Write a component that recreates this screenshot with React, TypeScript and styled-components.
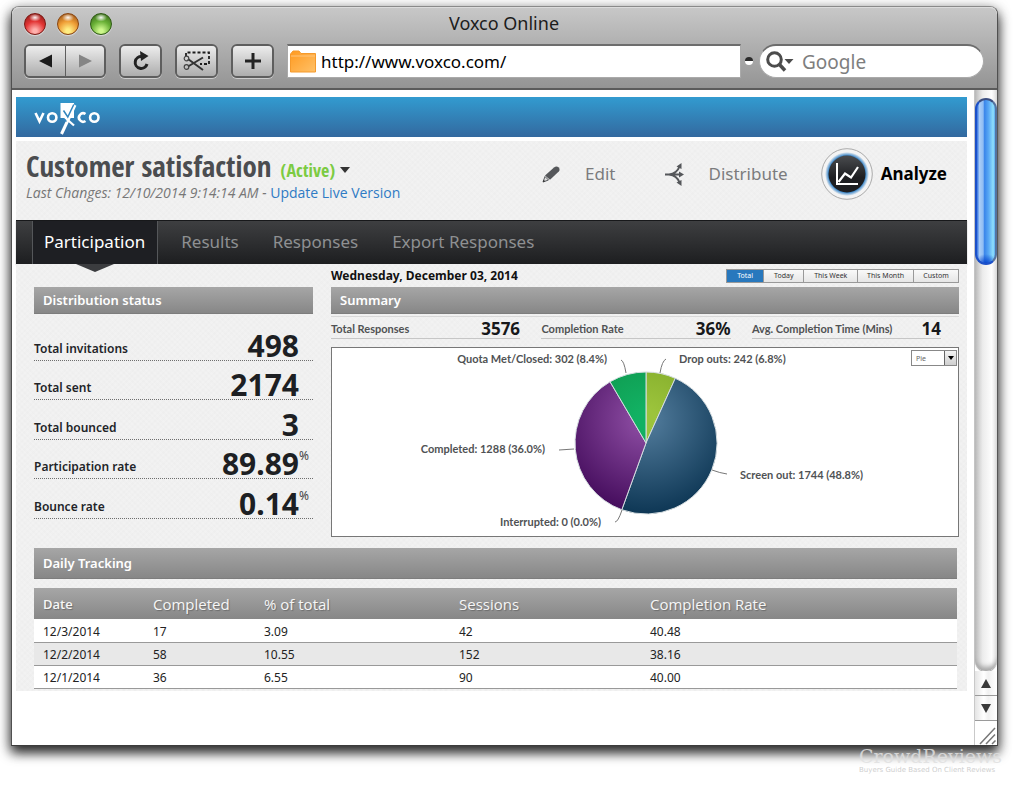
import React from "react";
import styled, { createGlobalStyle } from "styled-components";

const sans = `"Noto Sans", "Open Sans", sans-serif`;
const narrow = `"Open Sans Condensed", "Roboto Condensed", Lato, sans-serif`;
const humanist = `Lato, "Open Sans", sans-serif`;

const GlobalStyle = createGlobalStyle`
  *, *::before, *::after { box-sizing: border-box; }
  body { margin: 0; background: #fff; font-family: ${sans}; color: #222; }
  button, input, select { font: inherit; margin: 0; }
  a { text-decoration: none; color: inherit; }
  h1, h2, p, dl, dd { margin: 0; }
`;

/* ---------- Browser window ---------- */

const Stage = styled.div`
  display: flex;
  flex-direction: column;
  min-height: 100vh;
  padding: 6px 13px 0 11px;
  overflow: hidden;
`;

const Window = styled.div`
  display: flex;
  flex-direction: column;
  margin-right: 7px;
  border: 1px solid #555;
  border-color: #8a8a8a #505050 #3c3c3c #505050;
  border-radius: 8px 8px 0 0;
  background: #fff;
  box-shadow: 0 7px 12px rgba(0, 0, 0, 0.75), 0 3px 14px rgba(0, 0, 0, 0.4);
`;

const Chrome = styled.header`
  display: flex;
  flex-direction: column;
  gap: 7px;
  height: 83px;
  padding: 4px 13px 0 12px;
  border-bottom: 2px solid #5b5b5b;
  border-radius: 7px 7px 0 0;
  background: linear-gradient(#c8c8c8, #949494);
  box-shadow: inset 0 1px 0 #dcdcdc;
`;

const TitleRow = styled.div`
  display: grid;
  grid-template-columns: 1fr auto 1fr;
  align-items: center;
  height: 26px;
`;

const Lights = styled.div`
  display: flex;
  gap: 11px;
`;

const Light = styled.button<{ $dark: string; $base: string; $glow: string }>`
  width: 22px;
  height: 22px;
  padding: 0;
  border: 1px solid ${(p) => p.$dark};
  border-radius: 50%;
  background:
    radial-gradient(ellipse 6px 4px at 50% 18%, rgba(255, 255, 255, 0.95), rgba(255, 255, 255, 0) 100%),
    radial-gradient(circle at 50% 85%, ${(p) => p.$glow} 10%, ${(p) => p.$base} 50%, ${(p) => p.$dark} 100%);
  box-shadow: 0 1px 1px rgba(255, 255, 255, 0.5);
`;

const WindowTitle = styled.p`
  padding-bottom: 2px;
  font-size: 18px;
  line-height: 22px;
  color: #1c1c1c;
`;

const Toolbar = styled.div`
  display: flex;
  align-items: center;
`;

const ToolGroup = styled.div`
  display: flex;
  margin-right: 13px;
  border: 2px solid #5e5e5e;
  border-radius: 6px;
  overflow: hidden;
  box-shadow: 0 1px 0 rgba(255, 255, 255, 0.5);
`;

const ToolButton = styled.button`
  display: flex;
  align-items: center;
  justify-content: center;
  width: 39px;
  height: 30px;
  padding: 0;
  border: 0;
  background: linear-gradient(#ededed, #adadad);

  & + & {
    border-left: 1px solid #5e5e5e;
  }
`;

const AddressBar = styled.label`
  display: flex;
  flex: 1;
  align-items: center;
  gap: 5px;
  min-width: 0;
  height: 34px;
  padding: 0 2px;
  border: 1px solid #aaa;
  border-top: 2px solid #6d6d6d;
  background: #fff;
`;

const AddressInput = styled.input`
  flex: 1;
  width: 0;
  min-width: 0;
  padding: 0;
  border: 0;
  outline: 0;
  background: transparent;
  font-size: 17px;
  color: #000;
`;

const Knob = styled.span`
  width: 8px;
  height: 8px;
  margin: 0 6px 0 4px;
  border-radius: 50%;
  background: linear-gradient(#2b2b2b 45%, #fff 55%);
`;

const SearchBar = styled(AddressBar)`
  flex: 0 0 225px;
  gap: 8px;
  padding: 0 12px 0 6px;
  border-radius: 17px;
`;

const SearchInput = styled(AddressInput)`
  font-size: 19px;

  &::placeholder {
    color: #7e7e7e;
    opacity: 1;
  }
`;

const Viewport = styled.div`
  display: flex;
  min-height: 655px;
`;

/* ---------- Scroll bar ---------- */

const ScrollBar = styled.div`
  display: flex;
  flex-direction: column;
  width: 23px;
  border-left: 1px solid #c9c9c9;
  background: #fff;
`;

const ScrollTrack = styled.div`
  flex: 1;
  padding-top: 8px;
  border-radius: 0 0 11px 11px;
  background: linear-gradient(90deg, #bcbcbc, #ececec 35%, #fdfdfd 75%, #e2e2e2);
  box-shadow: inset 0 -6px 5px -2px #a5a5a5, 0 1px 1px #999;
`;

const ScrollThumb = styled.div`
  height: 167px;
  border: 2px solid #1c50c8;
  border-top-color: #3a4d80;
  border-right-color: #55739f;
  border-radius: 11px;
  background:
    radial-gradient(ellipse 12px 9px at 50% 100%, #0a49cf, rgba(20, 90, 220, 0)),
    linear-gradient(90deg, #2f6fe0, #a9cdf7 14%, #8fbcf3 34%, #3a86ea 42%, #5aaaf5 65%, #90e0fb 90%, #58a9f0);
`;

const ScrollButton = styled.button`
  display: flex;
  align-items: center;
  justify-content: center;
  height: 25px;
  padding: 0;
  border: 0;
  border-bottom: 1px solid #9a9a9a;
  background: linear-gradient(90deg, #e4e4e4, #fff 40%, #f1f1f1 60%, #fff);
`;

const Grip = styled.div`
  display: flex;
  align-items: flex-end;
  justify-content: flex-end;
  height: 24px;
`;

/* ---------- Page ---------- */

const Page = styled.main`
  display: flex;
  flex: 1;
  flex-direction: column;
  min-width: 0;
  padding: 7px 7px 0 4px;
`;

const texture = `
  repeating-linear-gradient(45deg, rgba(0, 0, 0, 0.008) 0 2px, transparent 2px 4px),
  repeating-linear-gradient(-45deg, rgba(0, 0, 0, 0.008) 0 2px, transparent 2px 4px),
  #f2f2f2`;

const Brand = styled.div`
  height: 40px;
  padding: 6px 18px 0;
  background: linear-gradient(#329bd0, #33699f);
`;

const PageHeader = styled.div`
  display: flex;
  justify-content: space-between;
  height: 79px;
  margin-top: 4px;
  padding: 7px 20px 0 10px;
  background: ${texture};
`;

const TitleLine = styled.div`
  display: flex;
  align-items: baseline;
  gap: 9px;
  height: 36px;
`;

const SurveyTitle = styled.h1`
  font-family: ${narrow};
  font-size: 29px;
  line-height: 36px;
  font-weight: 700;
  color: #4b4d50;
  white-space: nowrap;
`;

const StatusButton = styled.button`
  display: flex;
  align-items: center;
  gap: 5px;
  padding: 0;
  border: 0;
  background: none;
  font-family: ${narrow};
  font-size: 18px;
  line-height: 24px;
  font-weight: 700;
  color: #7ccb42;
`;

const Changes = styled.p`
  font-family: "Open Sans", sans-serif;
  font-size: 14px;
  line-height: 18px;
  font-style: italic;
  color: #777;
  white-space: nowrap;

  a {
    font-style: normal;
    color: #2f7bc4;
  }
`;

const Steps = styled.nav`
  display: flex;
  align-items: center;
  height: 52px;
`;

const Step = styled.a<{ $active?: boolean }>`
  display: flex;
  align-items: center;
  gap: ${(p) => (p.$active ? 8 : 25)}px;
  margin-left: ${(p) => (p.$active ? 33 : 49)}px;
  font-size: 17px;
  line-height: 24px;
  font-weight: ${(p) => (p.$active ? 700 : 400)};
  color: ${(p) => (p.$active ? "#000" : "#7b7b7d")};
`;

const Tabs = styled.nav`
  display: flex;
  height: 44px;
  padding-left: 16px;
  border-top: 1px solid #17181a;
  background: linear-gradient(#3e3f41, #1d1e20);
  box-shadow: 0 1px 1px #999;
`;

const Tab = styled.a<{ $active?: boolean }>`
  position: relative;
  display: flex;
  align-items: center;
  padding: ${(p) => (p.$active ? "0 12px 2px 11px" : "0 34px 2px 0")};
  margin-right: ${(p) => (p.$active ? 23 : 0)}px;
  border: solid #55575a;
  border-width: ${(p) => (p.$active ? "0 1px" : "0")};
  background: ${(p) => (p.$active ? "#1e1f23" : "none")};
  font-size: 17px;
  line-height: 24px;
  color: ${(p) => (p.$active ? "#fff" : "#8e9092")};
  white-space: nowrap;
`;

const TabPointer = styled.svg`
  position: absolute;
  top: 100%;
  left: 50%;
  margin-left: -19px;
  z-index: 1;
`;

const Body = styled.div`
  display: flex;
  flex-direction: column;
  padding: 0 8px 2px 18px;
  background: ${texture};
`;

const Columns = styled.div`
  display: flex;
  gap: 18px;
`;

const StatusColumn = styled.section`
  flex: 0 0 279px;
  padding-top: 23px;
`;

const SummaryColumn = styled.section`
  flex: 1;
  min-width: 0;
`;

const SectionBar = styled.h2<{ $tall?: boolean }>`
  display: flex;
  align-items: center;
  height: ${(p) => (p.$tall ? 31 : 27)}px;
  padding: 0 9px;
  border-bottom: 1px solid #7d7d7d;
  background: linear-gradient(#a6a6a6, #878787);
  font-size: 13px;
  line-height: 18px;
  font-weight: 600;
  color: #fff;
`;

const Metrics = styled.dl`
  display: grid;
  grid-auto-rows: 1fr;
  height: 198px;
  margin-top: 7px;
`;

const Metric = styled.div`
  display: flex;
  align-items: flex-end;
  border-bottom: 1px dotted #6e6e6e;
`;

const MetricLabel = styled.dt`
  flex: 1;
  padding-bottom: 3px;
  font-size: 12px;
  line-height: 16px;
  font-weight: 600;
  color: #222428;
`;

const MetricValue = styled.dd`
  display: flex;
  font-size: 30px;
  line-height: 28px;
  font-weight: 700;
  color: #1d1f23;
`;

const Unit = styled.span`
  width: 14px;
  font-size: 12px;
  line-height: 12px;
  font-weight: 400;
  color: #444;
`;

const DateRow = styled.div`
  display: flex;
  justify-content: space-between;
  align-items: center;
  height: 23px;
`;

const DateText = styled.p`
  font-size: 12px;
  line-height: 18px;
  font-weight: 700;
  color: #111;
`;

const Ranges = styled.div`
  display: flex;
  width: 233px;
  height: 14px;
  border: 1px solid #999;
`;

const Range = styled.button<{ $active?: boolean; $grow: number }>`
  flex: ${(p) => p.$grow} 0 0;
  padding: 0;
  border: 0;
  border-left: ${(p) => (p.$active ? 0 : 1)}px solid #999;
  background: ${(p) => (p.$active ? "#2878bd" : "linear-gradient(#f9f9f9, #e6e6e6)")};
  font-size: 7px;
  line-height: 12px;
  color: ${(p) => (p.$active ? "#fff" : "#333")};
  white-space: nowrap;
`;

const Totals = styled.dl`
  display: flex;
  justify-content: space-between;
  margin-top: 2px;
  padding-right: 18px;
  border-top: 1px solid #d8d8d8;
`;

const TotalItem = styled.div`
  display: flex;
  align-items: center;
  justify-content: space-between;
  width: 31%;
  height: 22px;
  padding-top: 3px;
  border-bottom: 1px solid #c6c6c6;
`;

const TotalLabel = styled.dt`
  font-family: ${humanist};
  font-size: 11px;
  line-height: 16px;
  font-weight: 700;
  color: #505254;
  white-space: nowrap;
`;

const TotalValue = styled.dd`
  font-size: 17px;
  line-height: 18px;
  font-weight: 700;
  color: #17181a;
`;

const ChartPanel = styled.div`
  position: relative;
  display: flex;
  justify-content: center;
  height: 190px;
  margin-top: 8px;
  border: 1px solid #777;
  background: #fff;
`;

const ChartText = styled.text`
  font-family: ${humanist};
  font-size: 11px;
  font-weight: 700;
  fill: #505254;
`;

const ChartType = styled.label`
  position: absolute;
  top: 2px;
  right: 1px;
  display: flex;
  width: 46px;
  height: 16px;
  border: 1px solid #888;
  background: #fff;
`;

const ChartSelect = styled.select`
  flex: 1;
  min-width: 0;
  padding: 0 0 0 4px;
  border: 0;
  outline: 0;
  appearance: none;
  background: none;
  font-size: 7px;
  color: #666;
`;

const SelectArrow = styled.span`
  display: flex;
  align-items: center;
  justify-content: center;
  width: 12px;
  border-left: 1px solid #666;
  background: linear-gradient(#f4f4f4, #cfcfcf);
`;

const Tracking = styled.section`
  display: flex;
  flex-direction: column;
  gap: 9px;
  margin: 11px 2px 0 0;
`;

const Table = styled.table`
  width: 100%;
  table-layout: fixed;
  border-collapse: collapse;
  background: #fff;
`;

const HeadRow = styled.tr`
  background: linear-gradient(#a6a6a6, #878787);
`;

const Heading = styled.th<{ $width?: number; $strong?: boolean }>`
  width: ${(p) => (p.$width ? `${p.$width}px` : "auto")};
  height: 31px;
  padding: 0 9px;
  text-align: left;
  font-family: "Open Sans", sans-serif;
  font-size: ${(p) => (p.$strong ? 13 : 15)}px;
  line-height: 20px;
  font-weight: ${(p) => (p.$strong ? 600 : 400)};
  color: #f6f6f6;
  text-shadow: 1px 1px 1px rgba(0, 0, 0, 0.25);
  white-space: nowrap;
`;

const DataRow = styled.tr`
  &:nth-child(even) {
    background: #e8e8e8;
  }
`;

const Cell = styled.td`
  height: 23px;
  padding: 3px 9px 0;
  border-bottom: 1px solid #999;
  font-size: 12px;
  line-height: 18px;
  color: #222;
`;

/* ---------- Watermark ---------- */

const Watermark = styled.footer`
  position: relative;
  align-self: flex-end;
  width: 146px;
  text-align: left;
  white-space: nowrap;
`;

const WatermarkName = styled.p`
  font-family: "DejaVu Serif", serif;
  font-size: 19px;
  line-height: 20px;
  color: rgba(224, 224, 224, 0.85);
`;

const WatermarkTag = styled.p`
  font-family: "DejaVu Sans", sans-serif;
  font-size: 7px;
  line-height: 9px;
  color: #cfcfcf;
`;

/* ---------- Data ---------- */

const metrics = [
  { label: "Total invitations", value: "498" },
  { label: "Total sent", value: "2174" },
  { label: "Total bounced", value: "3" },
  { label: "Participation rate", value: "89.89", unit: "%" },
  { label: "Bounce rate", value: "0.14", unit: "%" },
];

const totals = [
  { label: "Total Responses", value: "3576" },
  { label: "Completion Rate", value: "36%" },
  { label: "Avg. Completion Time (Mins)", value: "14" },
];

const ranges = [
  { label: "Total", grow: 37 },
  { label: "Today", grow: 40 },
  { label: "This Week", grow: 54 },
  { label: "This Month", grow: 56 },
  { label: "Custom", grow: 45 },
];

const slices = [
  { id: "drop", share: 242, from: "#9cc43c", to: "#769f21" },
  { id: "screen", share: 1744, from: "#4d7797", to: "#0d3654" },
  { id: "done", share: 1288, from: "#8a4aa0", to: "#430b5b" },
  { id: "quota", share: 302, from: "#12b163", to: "#0d8d45" },
];

const days = [
  ["12/3/2014", "17", "3.09", "42", "40.48"],
  ["12/2/2014", "58", "10.55", "152", "38.16"],
  ["12/1/2014", "36", "6.55", "90", "40.00"],
];

const cx = 314;
const cy = 95;
const radius = 71;

function arcPath(start: number, end: number) {
  const point = (t: number) => {
    const a = t * Math.PI * 2;
    return `${(cx + radius * Math.sin(a)).toFixed(2)} ${(cy - radius * Math.cos(a)).toFixed(2)}`;
  };
  return `M${cx} ${cy}L${point(start)}A${radius} ${radius} 0 ${end - start > 0.5 ? 1 : 0} 1 ${point(end)}Z`;
}

function PieChart() {
  const sum = slices.reduce((n, s) => n + s.share, 0);
  let at = 0;
  return (
    <svg width="626" height="188" viewBox="0 0 626 188" role="img" aria-label="Responses by outcome">
      <defs>
        {slices.map((s) => (
          <radialGradient key={s.id} id={s.id} gradientUnits="userSpaceOnUse" cx={cx} cy={cy - 24} r="96">
            <stop offset="0.1" stopColor={s.from} />
            <stop offset="1" stopColor={s.to} />
          </radialGradient>
        ))}
      </defs>
      {slices.map((s) => {
        const start = at / sum;
        at += s.share;
        return (
          <path key={s.id} d={arcPath(start, at / sum)} fill={`url(#${s.id})`} stroke="#d5dde0" strokeWidth="1" />
        );
      })}
      <g fill="none" stroke="#777" strokeWidth="1">
        <path d="M289 12q3 1 5 13" />
        <path d="M328 25q2-12 6-14" />
        <path d="M380 122q8 3 15 4" />
        <path d="M227 102l15-1" />
        <path d="M290 162q-4 12-7 12" />
      </g>
      <ChartText x="275" y="15" textAnchor="end">Quota Met/Closed: 302 (8.4%)</ChartText>
      <ChartText x="347" y="15">Drop outs: 242 (6.8%)</ChartText>
      <ChartText x="213" y="105" textAnchor="end">Completed: 1288 (36.0%)</ChartText>
      <ChartText x="408" y="131">Screen out: 1744 (48.8%)</ChartText>
      <ChartText x="269" y="178" textAnchor="end">Interrupted: 0 (0.0%)</ChartText>
    </svg>
  );
}

function Logo() {
  return (
    <svg width="68" height="32" viewBox="0 0 68 32" role="img" aria-label="voxco">
      <g fill="none" stroke="#fff" strokeWidth="2.6">
        <path d="M1.500 10l4 8.200 4-8.200" />
        <circle cx="18.200" cy="14.500" r="4.200" />
        <path d="M51.500 11a4.200 4.200 0 1 0 0 7" />
        <circle cx="60.300" cy="14.500" r="4.200" />
      </g>
      <path d="M26.500 0h13.500v15H26.500z" fill="#fff" />
      <path d="M27.500 31L41 2" fill="none" stroke="#fff" strokeWidth="3" />
      <path d="M31 14.500l9 8" fill="none" stroke="#fff" strokeWidth="2.200" />
      <path d="M29.500 7.500l4.300 6.500L39.800 1.500M29 15.500l3.500 3" fill="none" stroke="#3286be" strokeWidth="1.500" />
    </svg>
  );
}

function Pencil() {
  return (
    <svg width="18" height="17" viewBox="0 0 18 17" aria-hidden="true">
      <path d="M3 9.500L12 1.500q2.500-2 4.800 0 1.500 2.300 0 4L8 13.800z" fill="#55575a" />
      <path d="M3 10.500l-2 5.500 5.500-2z" fill="#ddd" stroke="#55575a" />
      <path d="M.8 16.300l2.400-1-1.500-1.500z" fill="#333" />
    </svg>
  );
}

function Branches() {
  return (
    <svg width="19" height="23" viewBox="0 0 19 23" aria-hidden="true">
      <path d="M0 11.500h15M4 11.500q8-1 10.500-8M4 11.500q8 1 10.500 8" fill="none" stroke="#55575a" strokeWidth="2" />
      <path d="M19 11.500l-5-3v6zM16.500 0l-5 3.500 5 2.500zM16.500 23l-5-3.500 5-2.500z" fill="#55575a" />
    </svg>
  );
}

function AnalyzeBadge() {
  return (
    <svg width="52" height="52" viewBox="0 0 52 52" aria-hidden="true">
      <defs>
        <linearGradient id="disc" x2="0" y2="1">
          <stop stopColor="#4a4c4f" />
          <stop offset="0.6" stopColor="#1d1e21" />
        </linearGradient>
        <radialGradient id="halo">
          <stop offset="0.84" stopColor="#3c87c9" />
          <stop offset="1" stopColor="#3c87c9" stopOpacity="0" />
        </radialGradient>
      </defs>
      <circle cx="26" cy="26" r="25.300" fill="#f4f4f4" stroke="#aaa" />
      <circle cx="26" cy="26" r="22" fill="url(#halo)" />
      <circle cx="26" cy="26" r="18.500" fill="url(#disc)" />
      <path d="M16 15v21h21" fill="none" stroke="#fff" strokeWidth="2" />
      <path d="M17.500 34l6.500-8.500 6 4L37 19" fill="none" stroke="#fff" strokeWidth="2.200" />
    </svg>
  );
}

export default function App() {
  return (
    <Stage>
      <GlobalStyle />
      <Window>
        <Chrome>
          <TitleRow>
            <Lights>
              <Light aria-label="Close" $dark="#7c1712" $base="#e23434" $glow="#ffb0ac" />
              <Light aria-label="Minimize" $dark="#8a4510" $base="#ee9c35" $glow="#ffee84" />
              <Light aria-label="Zoom" $dark="#2f5b14" $base="#69b036" $glow="#cdf78c" />
            </Lights>
            <WindowTitle>Voxco Online</WindowTitle>
          </TitleRow>
          <Toolbar>
            <ToolGroup>
              <ToolButton aria-label="Back">
                <svg width="14" height="14" viewBox="0 0 14 14"><path d="M0 7L13 .5v13z" fill="#1c1c1c" /></svg>
              </ToolButton>
              <ToolButton aria-label="Forward">
                <svg width="14" height="14" viewBox="0 0 14 14"><path d="M14 7L1 .5v13z" fill="#858585" /></svg>
              </ToolButton>
            </ToolGroup>
            <ToolGroup>
              <ToolButton aria-label="Reload">
                <svg width="18" height="20" viewBox="0 0 18 20">
                  <path d="M10 5.500a6 6 0 1 0 5 7.500" fill="none" stroke="#222" strokeWidth="3" />
                  <path d="M8 0l8.500 5L9 10z" fill="#222" />
                </svg>
              </ToolButton>
            </ToolGroup>
            <ToolGroup>
              <ToolButton aria-label="Clip">
                <svg width="28" height="20" viewBox="0 0 28 20" fill="none">
                  <path d="M3 5V1.500h23V13h-9" stroke="#1c1c1c" strokeWidth="1.800" strokeDasharray="3 2" />
                  <path d="M5 8l15 11M5 15.500L20 6.500" stroke="#333" strokeWidth="2" />
                  <circle cx="3.500" cy="7.500" r="2.300" stroke="#444" strokeWidth="1.200" />
                  <circle cx="3.500" cy="16" r="2.300" stroke="#444" strokeWidth="1.200" />
                </svg>
              </ToolButton>
            </ToolGroup>
            <ToolGroup>
              <ToolButton aria-label="Add bookmark">
                <svg width="16" height="16" viewBox="0 0 16 16"><path d="M8 0v16M0 8h16" stroke="#222" strokeWidth="3" /></svg>
              </ToolButton>
            </ToolGroup>
            <AddressBar>
              <svg width="26" height="24" viewBox="0 0 26 24" aria-hidden="true">
                <defs>
                  <linearGradient id="folder" x2="1" y2="1">
                    <stop stopColor="#ff9a20" />
                    <stop offset="1" stopColor="#ffc168" />
                  </linearGradient>
                </defs>
                <path d="M.5 22V4L3 1h6l2 2.500h14.500V22z" fill="url(#folder)" stroke="#f59a2c" />
                <path d="M1 6h24" stroke="#ffc57c" />
              </svg>
              <AddressInput aria-label="Address" defaultValue="http://www.voxco.com/" />
            </AddressBar>
            <Knob />
            <SearchBar>
              <svg width="28" height="21" viewBox="0 0 28 21" aria-hidden="true">
                <circle cx="8.500" cy="8.500" r="6.800" fill="none" stroke="#4c4c4c" strokeWidth="3" />
                <path d="M13 13l6 6.500" stroke="#4c4c4c" strokeWidth="3.500" />
                <path d="M18.500 8h9L23 13z" fill="#4c4c4c" />
              </svg>
              <SearchInput aria-label="Search" placeholder="Google" />
            </SearchBar>
          </Toolbar>
        </Chrome>

        <Viewport>
          <Page>
            <Brand>
              <Logo />
            </Brand>

            <PageHeader>
              <div>
                <TitleLine>
                  <SurveyTitle>Customer satisfaction</SurveyTitle>
                  <StatusButton>
                    (Active)
                    <svg width="10" height="6" viewBox="0 0 10 6" aria-hidden="true"><path d="M0 0h10L5 6z" fill="#333" /></svg>
                  </StatusButton>
                </TitleLine>
                <Changes>
                  Last Changes: 12/10/2014 9:14:14 AM - <a href="#update">Update Live Version</a>
                </Changes>
              </div>
              <Steps>
                <Step href="#edit"><Pencil />Edit</Step>
                <Step href="#distribute"><Branches />Distribute</Step>
                <Step href="#analyze" $active><AnalyzeBadge />Analyze</Step>
              </Steps>
            </PageHeader>

            <Tabs>
              <Tab href="#participation" $active>
                Participation
                <TabPointer width="38" height="8" viewBox="0 0 38 8" aria-hidden="true">
                  <path d="M0 0h38L19 8z" fill="#3b3c3f" />
                </TabPointer>
              </Tab>
              <Tab href="#results">Results</Tab>
              <Tab href="#responses">Responses</Tab>
              <Tab href="#export">Export Responses</Tab>
            </Tabs>

            <Body>
              <Columns>
                <StatusColumn>
                  <SectionBar>Distribution status</SectionBar>
                  <Metrics>
                    {metrics.map((m) => (
                      <Metric key={m.label}>
                        <MetricLabel>{m.label}</MetricLabel>
                        <MetricValue>
                          {m.value}
                          <Unit>{m.unit}</Unit>
                        </MetricValue>
                      </Metric>
                    ))}
                  </Metrics>
                </StatusColumn>

                <SummaryColumn>
                  <DateRow>
                    <DateText>Wednesday, December 03, 2014</DateText>
                    <Ranges>
                      {ranges.map((r, i) => (
                        <Range key={r.label} $grow={r.grow} $active={i === 0}>{r.label}</Range>
                      ))}
                    </Ranges>
                  </DateRow>
                  <SectionBar>Summary</SectionBar>
                  <Totals>
                    {totals.map((t) => (
                      <TotalItem key={t.label}>
                        <TotalLabel>{t.label}</TotalLabel>
                        <TotalValue>{t.value}</TotalValue>
                      </TotalItem>
                    ))}
                  </Totals>
                  <ChartPanel>
                    <PieChart />
                    <ChartType>
                      <ChartSelect aria-label="Chart type" defaultValue="Pie">
                        <option>Pie</option>
                        <option>Bar</option>
                      </ChartSelect>
                      <SelectArrow>
                        <svg width="6" height="4" viewBox="0 0 6 4" aria-hidden="true"><path d="M0 0h6L3 4z" fill="#000" /></svg>
                      </SelectArrow>
                    </ChartType>
                  </ChartPanel>
                </SummaryColumn>
              </Columns>

              <Tracking>
                <SectionBar $tall>Daily Tracking</SectionBar>
                <Table>
                  <thead>
                    <HeadRow>
                      <Heading $width={110} $strong>Date</Heading>
                      <Heading $width={111}>Completed</Heading>
                      <Heading $width={195}>% of total</Heading>
                      <Heading $width={191}>Sessions</Heading>
                      <Heading>Completion Rate</Heading>
                    </HeadRow>
                  </thead>
                  <tbody>
                    {days.map((row) => (
                      <DataRow key={row[0]}>
                        {row.map((value, i) => (
                          <Cell key={i}>{value}</Cell>
                        ))}
                      </DataRow>
                    ))}
                  </tbody>
                </Table>
              </Tracking>
            </Body>
          </Page>

          <ScrollBar aria-hidden="true">
            <ScrollTrack>
              <ScrollThumb />
            </ScrollTrack>
            <ScrollButton tabIndex={-1}>
              <svg width="10" height="9" viewBox="0 0 10 9"><path d="M5 0l5 9H0z" fill="#3a3a3a" /></svg>
            </ScrollButton>
            <ScrollButton tabIndex={-1}>
              <svg width="10" height="9" viewBox="0 0 10 9"><path d="M5 9l5-9H0z" fill="#3a3a3a" /></svg>
            </ScrollButton>
            <Grip>
              <svg width="18" height="18" viewBox="0 0 18 18">
                <path d="M1 17L16 1M7 17l9-9.500M13 17l3.500-3.500" stroke="#777" strokeWidth="1.500" />
              </svg>
            </Grip>
          </ScrollBar>
        </Viewport>
      </Window>

      <Watermark>
        <WatermarkName>CrowdReviews</WatermarkName>
        <WatermarkTag>Buyers Guide Based On Client Reviews</WatermarkTag>
      </Watermark>
    </Stage>
  );
}
